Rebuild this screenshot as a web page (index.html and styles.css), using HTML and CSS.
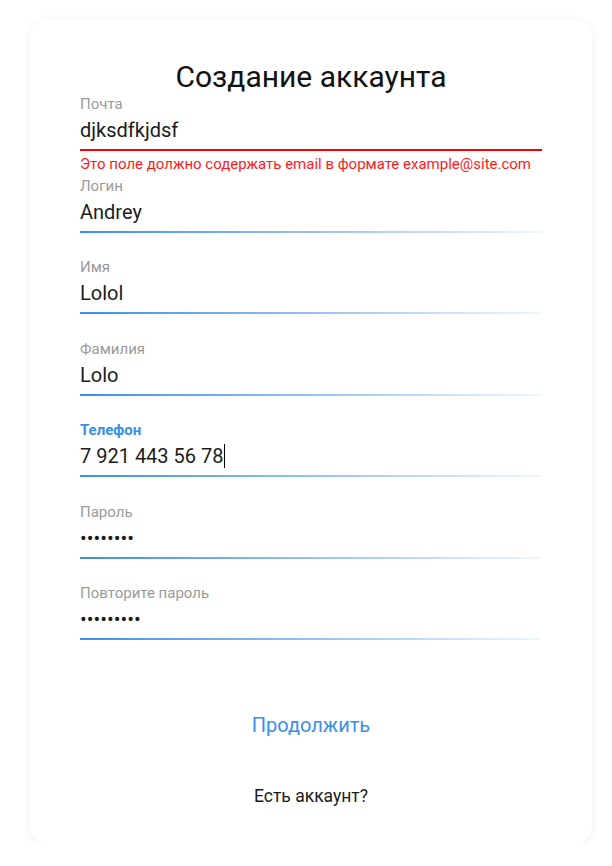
FILE: index.html
```html
<!DOCTYPE html>
<html lang="ru">
<head>
<meta charset="utf-8">
<title>Создание аккаунта</title>
<link rel="stylesheet" href="styles.css">
</head>
<body>
<div class="card">
  <h1 class="title">Создание аккаунта</h1>
  <form class="form">
    <div class="field field--error">
      <div class="label">Почта</div>
      <div class="value">djksdfkjdsf</div>
      <div class="line"></div>
      <div class="helper">Это поле должно содержать email в формате example@site.com</div>
    </div>
    <div class="field">
      <div class="label">Логин</div>
      <div class="value">Andrey</div>
      <div class="line"></div>
      <div class="helper"></div>
    </div>
    <div class="field">
      <div class="label">Имя</div>
      <div class="value">Lolol</div>
      <div class="line"></div>
      <div class="helper"></div>
    </div>
    <div class="field">
      <div class="label">Фамилия</div>
      <div class="value">Lolo</div>
      <div class="line"></div>
      <div class="helper"></div>
    </div>
    <div class="field field--focus">
      <div class="label">Телефон</div>
      <div class="value">7 921 443 56 78<span class="caret"></span></div>
      <div class="line"></div>
      <div class="helper"></div>
    </div>
    <div class="field">
      <div class="label">Пароль</div>
      <div class="value value--pass">••••••••</div>
      <div class="line"></div>
      <div class="helper"></div>
    </div>
    <div class="field">
      <div class="label">Повторите пароль</div>
      <div class="value value--pass">•••••••••</div>
      <div class="line"></div>
      <div class="helper"></div>
    </div>
    <div class="actions">
      <button type="button" class="btn-continue">Продолжить</button>
      <a class="link-login">Есть аккаунт?</a>
    </div>
  </form>
</div>
</body>
</html>
```

FILE: styles.css
```css
* { box-sizing: border-box; }
html, body { margin: 0; padding: 0; background: #fff; }
body {
  font-family: Roboto, "Liberation Sans", sans-serif;
  color: #1a1a1a;
}
.card {
  margin: 20px 0 0 30px;
  width: 562px;
  height: 823px;
  border-radius: 16px;
  background: #fff;
  box-shadow: 0 1px 8px rgba(0, 0, 0, 0.07);
  padding: 40px 50px 0;
}
.title {
  margin: 0 0 2px;
  font-size: 30px;
  line-height: 34px;
  font-weight: 400;
  text-align: center;
  color: #111;
}
.form { display: flex; flex-direction: column; }
.field { display: flex; flex-direction: column; }
.label {
  font-size: 15px;
  line-height: 17px;
  color: #9a9a9a;
}
.field--focus .label { color: #3b8fe8; font-weight: 700; }
.value {
  height: 36px;
  padding-bottom: 2px;
  display: flex;
  align-items: center;
  font-size: 20px;
  line-height: 24px;
  color: #1c1c1c;
}
.caret {
  display: inline-block;
  width: 1px;
  height: 24px;
  background: #000;
  margin-left: 0;
}
.line {
  height: 2px;
  background: linear-gradient(to right, #3b8fe8 0%, rgba(59, 143, 232, 0.55) 50%, rgba(59, 143, 232, 0.08) 100%);
}
.field--error .line { background: #ff0000; }
.helper {
  height: 26.5px;
  padding-top: 5px;
  font-size: 15px;
  line-height: 17px;
  color: #ff1a1a;
  white-space: nowrap;
}
.actions {
  display: flex;
  flex-direction: column;
  align-items: center;
  padding-top: 46px;
}
.btn-continue {
  border: 0;
  background: none;
  padding: 0;
  font-family: inherit;
  font-size: 20px;
  line-height: 24px;
  color: #3b8fe8;
  cursor: pointer;
}
.link-login {
  margin-top: 49px;
  font-size: 17.5px;
  line-height: 20px;
  color: #1a1a1a;
}
```
